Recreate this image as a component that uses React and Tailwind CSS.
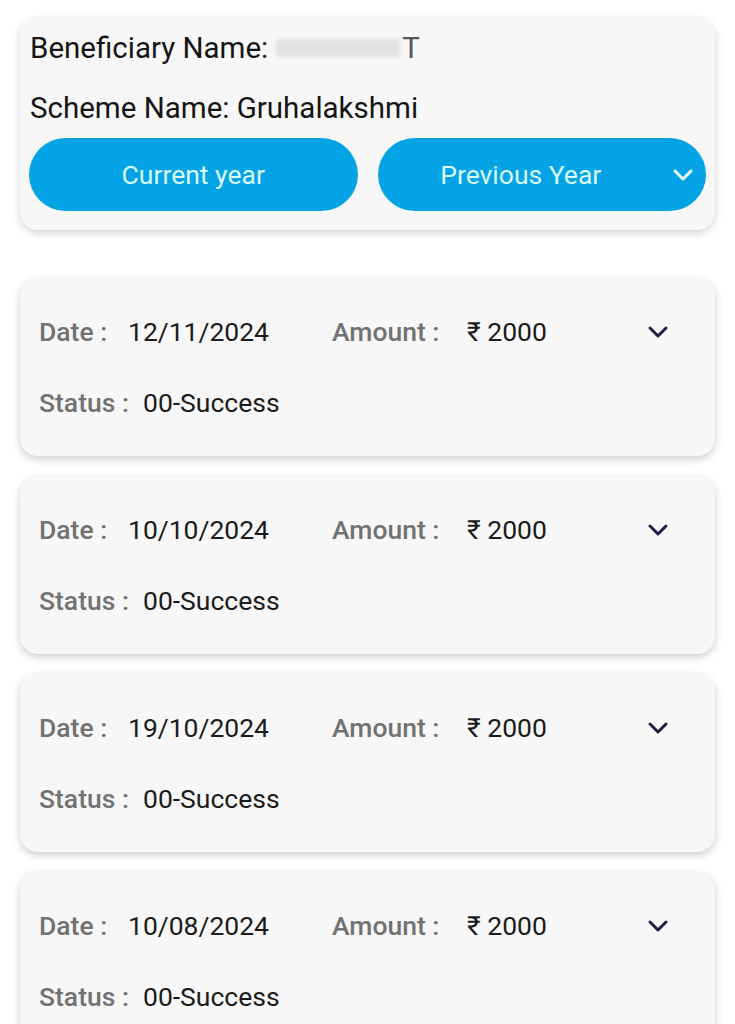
import React from "react";

const records = [
  { date: "12/11/2024", amount: "2000", status: "00-Success" },
  { date: "10/10/2024", amount: "2000", status: "00-Success" },
  { date: "19/10/2024", amount: "2000", status: "00-Success" },
  { date: "10/08/2024", amount: "2000", status: "00-Success" },
];

const Chevron = ({ className, color }) => (
  <svg width="22" height="14" viewBox="0 0 22 14" className={className}>
    <polyline
      points="3,3 11,11 19,3"
      fill="none"
      stroke={color}
      strokeWidth="3"
      strokeLinecap="round"
      strokeLinejoin="round"
    />
  </svg>
);

const RecordCard = ({ item }) => (
  <div className="h-[178px] shrink-0 rounded-[18px] bg-[#f7f7f7] shadow-[0_3px_8px_rgba(0,0,0,0.2)] pl-[19px] pr-[46px] pt-[36px]">
    <div className="flex h-[36px] items-center text-[26.5px]">
      <span className="w-[89px] font-medium text-[#727272]">Date :</span>
      <span className="w-[204px] text-[#1b1b1b]">{item.date}</span>
      <span className="w-[135px] font-medium text-[#727272]">Amount :</span>
      <span className="text-[#1b1b1b]">₹ {item.amount}</span>
      <Chevron className="ml-auto" color="#1f1d45" />
    </div>
    <div className="mt-[35px] flex h-[36px] items-center text-[26.5px]">
      <span className="w-[104px] font-medium text-[#727272]">Status :</span>
      <span className="text-[#1b1b1b]">{item.status}</span>
    </div>
  </div>
);

const App = () => {
  return (
    <div className="h-[1024px] overflow-hidden bg-white px-[20px] pt-[18px] font-['Roboto',sans-serif]">
      <div className="rounded-[18px] bg-[#f7f7f7] px-[9px] pt-[12px] pb-[19px] shadow-[0_3px_8px_rgba(0,0,0,0.18)]">
        <div className="flex h-[36px] items-center pl-[1px] text-[29.5px] text-[#151515]">
          <span>Beneficiary Name:</span>
          <span className="ml-[8px] inline-block h-[18px] w-[124px] rounded-sm bg-[#e2e2e2] blur-[2px]"></span>
          <span className="ml-[2px] text-[#555]">T</span>
        </div>
        <div className="mt-[24px] flex h-[36px] items-center pl-[1px] text-[29.5px] text-[#151515]">
          Scheme Name: Gruhalakshmi
        </div>
        <div className="mt-[12px] grid grid-cols-2 gap-[20px]">
          <button className="flex h-[73px] items-center justify-center rounded-full bg-[#03a3e6] text-[26.5px] text-[#d8fbfd]">
            Current year
          </button>
          <button className="relative flex h-[73px] items-center justify-center rounded-full bg-[#03a3e6] pr-[42px] text-[26.5px] text-[#d8fbfd]">
            Previous Year
            <Chevron className="absolute right-[12px]" color="#eafcff" />
          </button>
        </div>
      </div>
      <div className="mt-[48px] flex flex-col gap-[20px]">
        {records.map((item, index) => (
          <RecordCard key={index} item={item} />
        ))}
      </div>
    </div>
  );
};

export default App;
